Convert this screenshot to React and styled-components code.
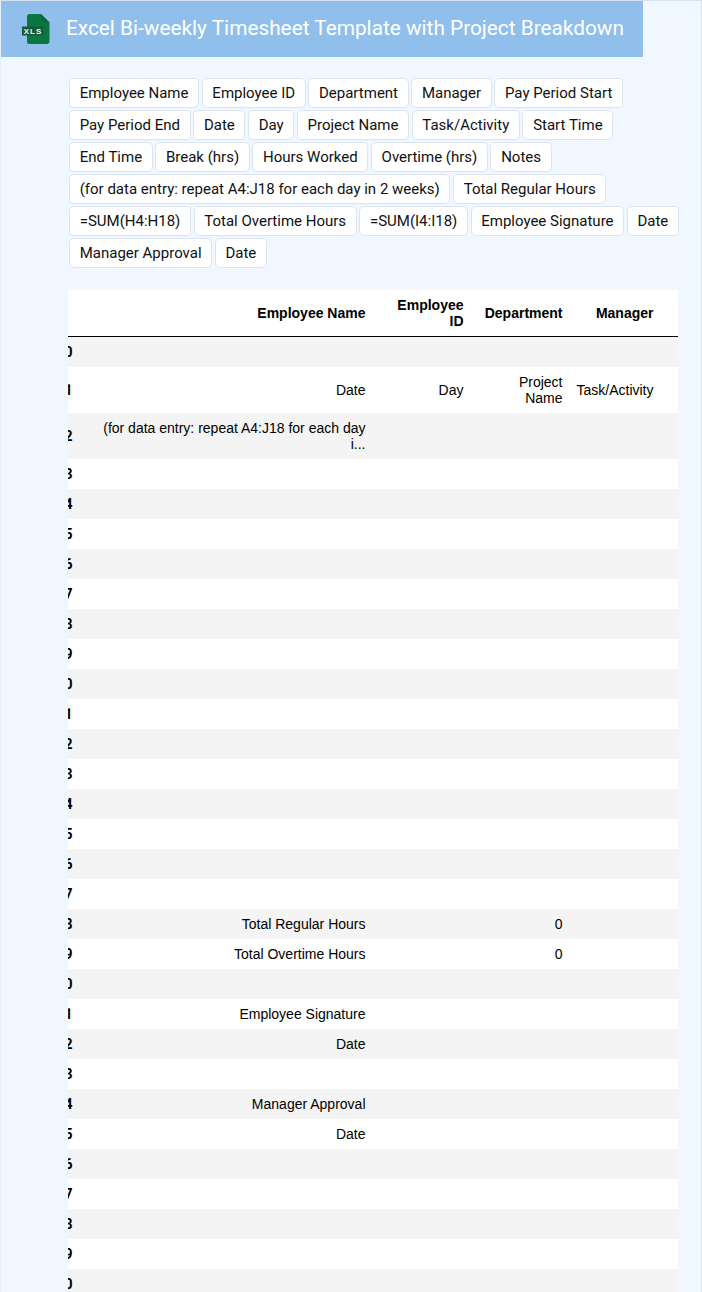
import React from "react";
import styled, { createGlobalStyle } from "styled-components";

const Global = createGlobalStyle`
  html, body { margin: 0; padding: 0; height: 100%; overflow: hidden; }
  body { font-family: Roboto, "Liberation Sans", sans-serif; background: #f0f7ff; }
`;

const Page = styled.div`
  box-sizing: border-box;
  height: 1292px;
  overflow: hidden;
  border-top: 1px solid #d5e2f2;
  border-right: 1px solid #d5e2f2;
  border-left: 1px solid #e6f0fb;
  background: #f0f7ff;
`;

const Banner = styled.header`
  display: inline-flex;
  align-items: center;
  gap: 16px;
  height: 56px;
  padding: 0 19px 0 21px;
  background: #90bfec;
  vertical-align: top;
`;

const Title = styled.h1`
  margin: 0 0 2px;
  font: 400 20.8px/28px Roboto, sans-serif;
  color: #fff;
  white-space: nowrap;
`;

const Chips = styled.div`
  display: flex;
  flex-wrap: wrap;
  gap: 2px 2.5px;
  width: 612px;
  margin: 21px 0 0 68px;
`;

const Chip = styled.span`
  box-sizing: border-box;
  height: 30px;
  padding: 0 9.7px;
  border: 1px solid #dbe5f1;
  border-radius: 5px;
  background: #fff;
  color: #111;
  font: 400 15px/28px Roboto, sans-serif;
  white-space: nowrap;
`;

const TableClip = styled.div`
  width: 610px;
  margin: 22px 0 0 67px;
  overflow: hidden;
`;

const Table = styled.table`
  table-layout: fixed;
  width: 692px;
  margin-left: -20px;
  border-collapse: collapse;
  border-spacing: 0;
  font: 400 14px/16px "Liberation Sans", Arial, sans-serif;
  color: #000;
`;

const HeadRow = styled.tr`
  background: #fff;
  border-bottom: 1px solid #000;
`;

const BodyRow = styled.tr`
  background: ${(p) => (p.$odd ? "#fff" : "#f4f4f4")};
`;

const Heading = styled.th`
  padding: 7px;
  font-weight: 700;
  text-align: right;
  vertical-align: middle;
`;

const RowIndex = styled(Heading)`
  font-family: Roboto, sans-serif;
`;

const Cell = styled.td`
  padding: 7px;
  text-align: right;
  vertical-align: middle;
`;

const XlsIcon = () => (
  <svg width="28" height="30" viewBox="0 0 28 30" aria-hidden="true">
    <path d="M5 2.500A2.500 2.500 0 0 1 7.500 0H19l8.500 8.500V27a3 3 0 0 1-3 3H7.500A2.500 2.500 0 0 1 5 27.500Z" fill="#0a7641" />
    <path d="M19 0l8.500 8.500h-6A2.500 2.500 0 0 1 19 6Z" fill="#066a39" />
    <rect x="0" y="12.500" width="21.500" height="9" fill="#145c3a" />
    <text x="11" y="20" textAnchor="middle" fontFamily="Liberation Sans, sans-serif" fontSize="8" fontWeight="700" letterSpacing="1" fill="#eef6f0">XLS</text>
  </svg>
);

const chips = [
  "Employee Name", "Employee ID", "Department", "Manager", "Pay Period Start",
  "Pay Period End", "Date", "Day", "Project Name", "Task/Activity", "Start Time",
  "End Time", "Break (hrs)", "Hours Worked", "Overtime (hrs)", "Notes",
  "(for data entry: repeat A4:J18 for each day in 2 weeks)", "Total Regular Hours",
  "=SUM(H4:H18)", "Total Overtime Hours", "=SUM(I4:I18)", "Employee Signature", "Date",
  "Manager Approval", "Date",
];

const filled = {
  1: ["Date", "Day", <>Project<br />Name</>, "Task/Activity"],
  2: [<>(for data entry: repeat A4:J18 for each day<br />i...</>],
  18: ["Total Regular Hours", null, 0],
  19: ["Total Overtime Hours", null, 0],
  21: ["Employee Signature"],
  22: ["Date"],
  24: ["Manager Approval"],
  25: ["Date"],
};

const rows = Array.from({ length: 31 }, (_, i) => i);

export default function App() {
  return (
    <>
      <Global />
      <Page>
        <Banner>
          <XlsIcon />
          <Title>Excel Bi-weekly Timesheet Template with Project Breakdown</Title>
        </Banner>
        <Chips>
          {chips.map((c, i) => <Chip key={i}>{c}</Chip>)}
        </Chips>
        <TableClip>
          <Table>
            <colgroup>
              <col style={{ width: 31.5 }} />
              <col style={{ width: 293 }} />
              <col style={{ width: 98 }} />
              <col style={{ width: 99 }} />
              <col style={{ width: 91 }} />
              <col style={{ width: 79.5 }} />
            </colgroup>
            <thead>
              <HeadRow>
                <Heading />
                <Heading>Employee Name</Heading>
                <Heading>Employee<br />ID</Heading>
                <Heading>Department</Heading>
                <Heading>Manager</Heading>
                <Heading />
              </HeadRow>
            </thead>
            <tbody>
              {rows.map((i) => {
                const v = filled[i] || [];
                return (
                  <BodyRow key={i} $odd={i % 2 === 1}>
                    <RowIndex>{i}</RowIndex>
                    <Cell>{v[0]}</Cell>
                    <Cell>{v[1]}</Cell>
                    <Cell>{v[2]}</Cell>
                    <Cell>{v[3]}</Cell>
                    <Cell />
                  </BodyRow>
                );
              })}
            </tbody>
          </Table>
        </TableClip>
      </Page>
    </>
  );
}
